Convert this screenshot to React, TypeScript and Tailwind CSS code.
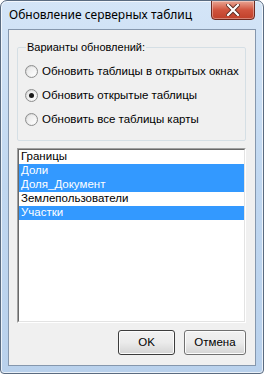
import React from "react";

const options = [
  "Обновить таблицы в открытых окнах",
  "Обновить открытые таблицы",
  "Обновить все таблицы карты",
];

const tables = [
  { name: "Границы", selected: false },
  { name: "Доли", selected: true },
  { name: "Доля_Документ", selected: true },
  { name: "Землепользователи", selected: false },
  { name: "Участки", selected: true },
];

const Radio: React.FC<{ checked: boolean; label: string }> = ({ checked, label }) => (
  <div className="flex items-center h-[16px] pl-[7px]">
    <span className="w-[13px] h-[13px] rounded-full border border-[#8e8f8f] bg-gradient-to-br from-[#cfcfcf] to-white flex items-center justify-center shrink-0">
      <span className="w-[9px] h-[9px] rounded-full bg-gradient-to-br from-[#e6e6e6] to-[#ffffff] flex items-center justify-center">
        {checked && <span className="w-[5px] h-[5px] rounded-full bg-[#1a1a1a]" />}
      </span>
    </span>
    <span className="ml-[4px] text-[11.5px] leading-[16px] text-black whitespace-nowrap">{label}</span>
  </div>
);

const Button: React.FC<{ label: string; primary?: boolean; width: string }> = ({ label, primary, width }) => (
  <button
    className={`${width} h-[25px] rounded-[3px] border ${primary ? "border-[#3c3c3c]" : "border-[#707070]"} bg-gradient-to-b from-[#f2f2f2] via-[#ebebeb] to-[#d4d4d4] shadow-[inset_0_0_0_1px_#fcfcfc] text-[11.5px] text-black`}
  >
    {label}
  </button>
);

export default function App() {
  const selected = 1;
  return (
    <div className="w-[264px] h-[374px] flex flex-col rounded-t-[7px] rounded-b-[4px] border border-[#5a6b80] bg-gradient-to-b from-[#d4e5f7] via-[#c0d7f0] to-[#b9d1ec] shadow-[inset_0_0_0_1px_rgba(255,255,255,0.7)] font-['Liberation_Sans',Arial,sans-serif] relative overflow-hidden">
      <div className="h-[28px] shrink-0 pl-[8px] pt-[6px] text-[12px] leading-[16px] text-black font-['Noto_Sans',sans-serif]">
        Обновление серверных таблиц
      </div>
      <div className="absolute top-[-1px] right-[8px] w-[44px] h-[20px] rounded-b-[4px] border border-[#6e2a20] bg-gradient-to-b from-[#e8a493] via-[#d0533d] to-[#c0402a] shadow-[inset_0_0_0_1px_rgba(255,255,255,0.35)] flex items-center justify-center">
        <svg width="14" height="12" viewBox="0 0 14 12">
          <path d="M2 1 L12 11 M12 1 L2 11" stroke="#5a2a22" strokeWidth="4" strokeLinecap="square" />
          <path d="M2 1 L12 11 M12 1 L2 11" stroke="#ffffff" strokeWidth="2.2" strokeLinecap="square" />
        </svg>
      </div>
      <div className="flex-1 mx-[7px] mb-[7px] border border-[#8597ad] bg-[#f0f0f0] flex flex-col">
        <fieldset className="mt-[10px] ml-[8px] mr-[9px] border border-[#d5dfe5] rounded-[2px] pb-[13px]">
          <legend className="ml-[8px] px-[1px] text-[11px] leading-[14px] text-black">Варианты обновлений:</legend>
          <div className="flex flex-col gap-[8px] pt-[9px]">
            {options.map((o, i) => (
              <Radio key={o} label={o} checked={i === selected} />
            ))}
          </div>
        </fieldset>
        <div className="mt-[7px] ml-[8px] mr-[9px] h-[175px] border border-t-[#a0a0a0] border-l-[#a0a0a0] border-r-white border-b-white">
          <div className="h-full border border-t-[#696969] border-l-[#696969] border-r-[#e3e3e3] border-b-[#e3e3e3] bg-white">
            {tables.map((t) => (
              <div
                key={t.name}
                className={`h-[14px] px-[2px] text-[11.5px] leading-[13px] ${t.selected ? "bg-[#3399ff] text-white" : "text-black"}`}
              >
                {t.name}
              </div>
            ))}
          </div>
        </div>
        <div className="mt-[7px] flex justify-end gap-[9px] mr-[9px]">
          <Button label="OK" primary width="w-[57px]" />
          <Button label="Отмена" width="w-[62px]" />
        </div>
      </div>
    </div>
  );
}
